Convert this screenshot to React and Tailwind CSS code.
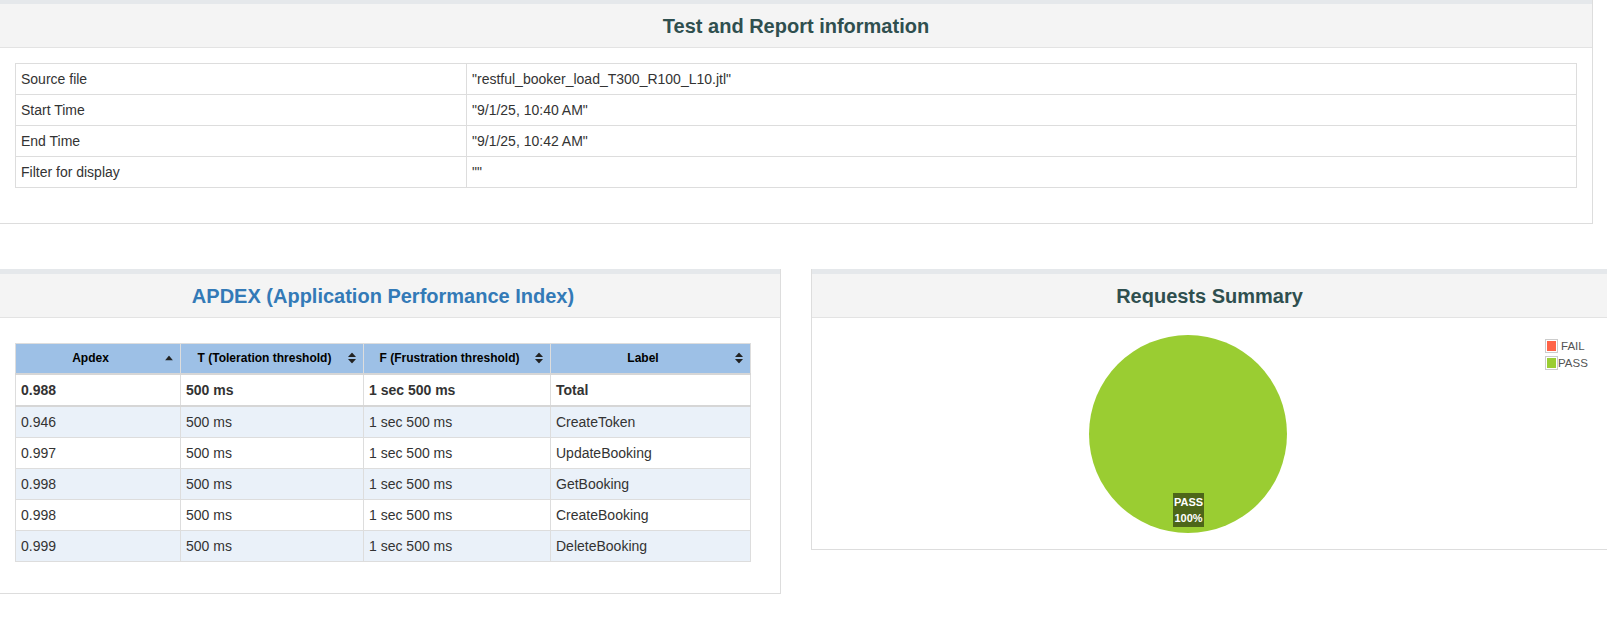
import React from "react";

const font = { fontFamily: '"Liberation Sans", Arial, Helvetica, sans-serif' };

function SortBoth() {
  return (
    <svg width="8" height="11" viewBox="0 0 8 11" className="block">
      <path d="M4 0 L8 4.5 L0 4.5 Z" fill="#222" />
      <path d="M4 11 L8 6.5 L0 6.5 Z" fill="#222" />
    </svg>
  );
}

function SortUp() {
  return (
    <svg width="8" height="5" viewBox="0 0 8 5" className="block">
      <path d="M4 0 L8 5 L0 5 Z" fill="#222" />
    </svg>
  );
}

function PanelHeading({ children, color = "text-[#2f4f4f]" }) {
  return (
    <div className="border-t-[5px] border-[#e5e8eb] bg-[#f4f4f4] border-b border-b-[#e3e3e3] h-[49px] flex items-center justify-center">
      <h2 className={`text-[20px] font-bold leading-[24px] pt-px ${color}`}>{children}</h2>
    </div>
  );
}

const infoRows = [
  ["Source file", '"restful_booker_load_T300_R100_L10.jtl"'],
  ["Start Time", '"9/1/25, 10:40 AM"'],
  ["End Time", '"9/1/25, 10:42 AM"'],
  ["Filter for display", '""'],
];

const apdexRows = [
  ["0.946", "500 ms", "1 sec 500 ms", "CreateToken"],
  ["0.997", "500 ms", "1 sec 500 ms", "UpdateBooking"],
  ["0.998", "500 ms", "1 sec 500 ms", "GetBooking"],
  ["0.998", "500 ms", "1 sec 500 ms", "CreateBooking"],
  ["0.999", "500 ms", "1 sec 500 ms", "DeleteBooking"],
];

export default function App() {
  return (
    <div className="w-[1607px] h-[638px] overflow-hidden bg-white text-[#333] relative" style={font}>
      {/* Test and Report information */}
      <div className="w-[1593px] -mt-px border-r border-b border-[#dddddd]">
        <PanelHeading>Test and Report information</PanelHeading>
        <div className="pt-[15px] pl-[15px] pr-[15px] pb-[35px]">
          <table className="w-full border-collapse text-[14px] leading-[20px]">
            <tbody>
              {infoRows.map(([k, v]) => (
                <tr key={k}>
                  <td className="w-[451px] border border-[#dddddd] px-[5px] py-[5px]">{k}</td>
                  <td className="border border-[#dddddd] px-[5px] py-[5px]">{v}</td>
                </tr>
              ))}
            </tbody>
          </table>
        </div>
      </div>

      <div className="flex mt-[45px] items-start">
        {/* APDEX */}
        <div className="w-[795px] -ml-[14px] shrink-0 border-r border-b border-[#dddddd]">
          <PanelHeading color="text-[#337ab7]">APDEX (Application Performance Index)</PanelHeading>
          <div className="pt-[25px] pl-[29px] pr-[30px] pb-[31px]">
            <table className="w-[735px] border-collapse text-[14px] leading-[20px] table-fixed">
              <colgroup>
                <col className="w-[165px]" />
                <col className="w-[183px]" />
                <col className="w-[187px]" />
                <col className="w-[200px]" />
              </colgroup>
              <thead>
                <tr className="bg-[#9dc0e6] text-[12px] font-bold text-black">
                  {[
                    ["Apdex", true],
                    ["T (Toleration threshold)", false],
                    ["F (Frustration threshold)", false],
                    ["Label", false],
                  ].map(([h, up]) => (
                    <th
                      key={h}
                      className="relative h-[30px] border border-[#dddddd] border-b-2 border-b-[#d6d6d6] pl-[5px] pr-[20px] py-0 text-center font-bold leading-[20px]"
                    >
                      {h}
                      <span className="absolute right-[7px] top-1/2 -translate-y-1/2">
                        {up ? <SortUp /> : <SortBoth />}
                      </span>
                    </th>
                  ))}
                </tr>
              </thead>
              <tbody>
                <tr className="font-bold bg-white">
                  {["0.988", "500 ms", "1 sec 500 ms", "Total"].map((c, i) => (
                    <td key={i} className="border border-[#dddddd] border-b-2 border-b-[#d6d6d6] px-[5px] py-[5px]">
                      {c}
                    </td>
                  ))}
                </tr>
                {apdexRows.map((r, ri) => (
                  <tr key={ri} className={ri % 2 === 0 ? "bg-[#eaf1f9]" : "bg-white"}>
                    {r.map((c, i) => (
                      <td key={i} className="border border-[#dddddd] px-[5px] py-[5px]">
                        {c}
                      </td>
                    ))}
                  </tr>
                ))}
              </tbody>
            </table>
          </div>
        </div>

        {/* Requests Summary */}
        <div className="ml-[30px] w-[797px] shrink-0 border-l border-r border-b border-[#dddddd]">
          <PanelHeading>Requests Summary</PanelHeading>
          <div className="relative h-[231px]">
            <div className="absolute left-[276px] top-[16px]">
              <svg width="200" height="200" viewBox="0 0 200 200" className="block">
                <circle cx="100" cy="100" r="99" fill="#9acd32" />
              </svg>
              <div className="absolute left-[85px] top-[159px] w-[31px] h-[34px] bg-[#4d6619] text-white text-[11px] font-bold leading-[16px] flex flex-col items-center justify-center">
                <span>PASS</span>
                <span>100%</span>
              </div>
            </div>
            <div className="absolute left-[733px] top-[21px] flex flex-col gap-[3px] text-[11.5px] text-[#545454] leading-[14px]">
              <div className="flex items-center gap-[3px]">
                <div className="border border-[#cccccc] p-px">
                  <div className="w-[9px] h-[10px] bg-[#ff6347]" />
                </div>
                <span>FAIL</span>
              </div>
              <div className="flex items-center gap-0">
                <div className="border border-[#cccccc] p-px">
                  <div className="w-[9px] h-[10px] bg-[#9acd32]" />
                </div>
                <span>PASS</span>
              </div>
            </div>
          </div>
        </div>
      </div>
    </div>
  );
}
